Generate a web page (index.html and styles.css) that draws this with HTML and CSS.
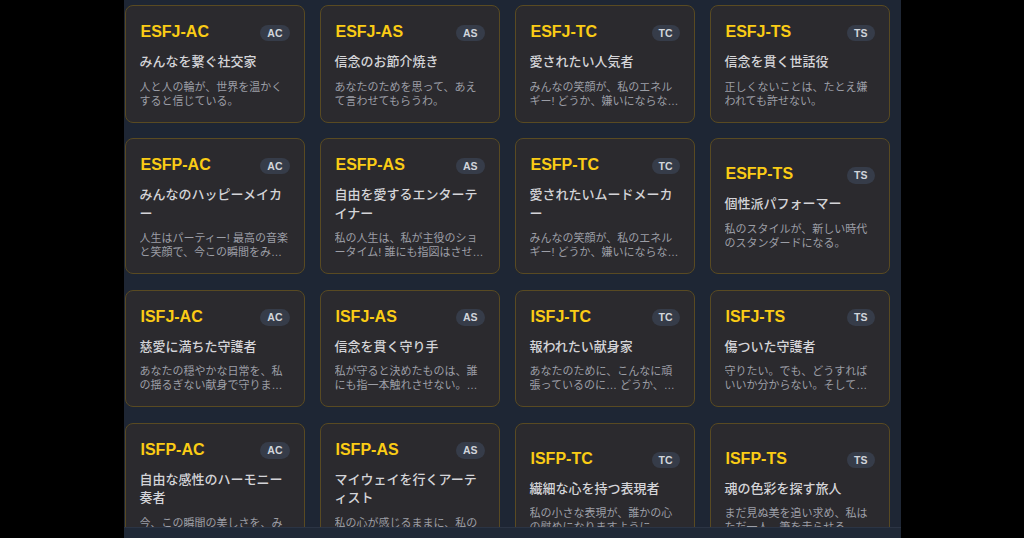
FILE: index.html
```html
<!DOCTYPE html>
<html lang="ja">
<head>
<meta charset="utf-8">
<title>Types</title>
<link rel="stylesheet" href="styles.css">
</head>
<body>
<div class="panel">
  <main class="scroll">
    <div class="grid">
      <div class="card"><div class="head"><span class="title">ESFJ-AC</span><span class="badge">AC</span></div><p class="tag">みんなを繋ぐ社交家</p><p class="desc">人と人の輪が、世界を温かくすると信じている。</p></div>
      <div class="card"><div class="head"><span class="title">ESFJ-AS</span><span class="badge">AS</span></div><p class="tag">信念のお節介焼き</p><p class="desc">あなたのためを思って、あえて言わせてもらうわ。</p></div>
      <div class="card"><div class="head"><span class="title">ESFJ-TC</span><span class="badge">TC</span></div><p class="tag">愛されたい人気者</p><p class="desc">みんなの笑顔が、私のエネルギー! どうか、嫌いにならないで。</p></div>
      <div class="card"><div class="head"><span class="title">ESFJ-TS</span><span class="badge">TS</span></div><p class="tag">信念を貫く世話役</p><p class="desc">正しくないことは、たとえ嫌われても許せない。</p></div>

      <div class="card"><div class="head"><span class="title">ESFP-AC</span><span class="badge">AC</span></div><p class="tag">みんなのハッピーメイカー</p><p class="desc">人生はパーティー! 最高の音楽と笑顔で、今この瞬間をみんなで楽しもう!</p></div>
      <div class="card"><div class="head"><span class="title">ESFP-AS</span><span class="badge">AS</span></div><p class="tag">自由を愛するエンターテイナー</p><p class="desc">私の人生は、私が主役のショータイム! 誰にも指図はさせない。</p></div>
      <div class="card"><div class="head"><span class="title">ESFP-TC</span><span class="badge">TC</span></div><p class="tag">愛されたいムードメーカー</p><p class="desc">みんなの笑顔が、私のエネルギー! どうか、嫌いにならないで。</p></div>
      <div class="card"><div class="head"><span class="title">ESFP-TS</span><span class="badge">TS</span></div><p class="tag">個性派パフォーマー</p><p class="desc">私のスタイルが、新しい時代のスタンダードになる。</p></div>

      <div class="card"><div class="head"><span class="title">ISFJ-AC</span><span class="badge">AC</span></div><p class="tag">慈愛に満ちた守護者</p><p class="desc">あなたの穏やかな日常を、私の揺るぎない献身で守ります。</p></div>
      <div class="card"><div class="head"><span class="title">ISFJ-AS</span><span class="badge">AS</span></div><p class="tag">信念を貫く守り手</p><p class="desc">私が守ると決めたものは、誰にも指一本触れさせない。それが私の誓い。</p></div>
      <div class="card"><div class="head"><span class="title">ISFJ-TC</span><span class="badge">TC</span></div><p class="tag">報われたい献身家</p><p class="desc">あなたのために、こんなに頑張っているのに… どうか、気づいてほしい。</p></div>
      <div class="card"><div class="head"><span class="title">ISFJ-TS</span><span class="badge">TS</span></div><p class="tag">傷ついた守護者</p><p class="desc">守りたい。でも、どうすればいいか分からない。そして今日も迷う。</p></div>

      <div class="card"><div class="head"><span class="title">ISFP-AC</span><span class="badge">AC</span></div><p class="tag">自由な感性のハーモニー奏者</p><p class="desc">今、この瞬間の美しさを、みんなと分かち合いたい。</p></div>
      <div class="card"><div class="head"><span class="title">ISFP-AS</span><span class="badge">AS</span></div><p class="tag">マイウェイを行くアーティスト</p><p class="desc">私の心が感じるままに、私の色で世界を描く。</p></div>
      <div class="card"><div class="head"><span class="title">ISFP-TC</span><span class="badge">TC</span></div><p class="tag">繊細な心を持つ表現者</p><p class="desc">私の小さな表現が、誰かの心の慰めになりますように。</p></div>
      <div class="card"><div class="head"><span class="title">ISFP-TS</span><span class="badge">TS</span></div><p class="tag">魂の色彩を探す旅人</p><p class="desc">まだ見ぬ美を追い求め、私はただ一人、筆を走らせる。</p></div>
    </div>
  </main>
  <footer class="bottom"></footer>
</div>
</body>
</html>
```

FILE: styles.css
```css
* { box-sizing: border-box; }
html, body { margin: 0; padding: 0; height: 100%; }
body {
  background: #000;
  font-family: "Liberation Sans", "Noto Sans CJK JP", sans-serif;
  overflow: hidden;
}
.panel {
  width: 777px;
  height: 538px;
  margin: 0 auto;
  background: #1e2634;
  display: flex;
  flex-direction: column;
}
.scroll {
  flex: 1;
  overflow: hidden;
  padding: 5px 11px 0 1px;
}
.grid {
  display: grid;
  grid-template-columns: repeat(4, 180px);
  column-gap: 15px;
  row-gap: 15.5px;
}
.card {
  background: #2b2a2e;
  border: 1px solid #594a22;
  border-radius: 8px;
  padding: 14px 14px 14px;
  display: flex;
  flex-direction: column;
  justify-content: center;
}
.head {
  display: flex;
  justify-content: space-between;
  align-items: center;
  height: 24px;
  padding-left: 1px;
}
.title {
  font-size: 16px;
  font-weight: 700;
  line-height: 24px;
  color: #facc15;
}
.badge {
  font-size: 10.5px;
  font-weight: 600;
  line-height: 12.5px;
  padding: 2px 7px;
  border-radius: 999px;
  background: #363c49;
  color: #d1d5db;
  margin-top: 2px;
}
.tag {
  margin: 9px 0 0;
  font-size: 13px;
  line-height: 18.5px;
  font-weight: 500;
  color: #d4d4d8;
}
.desc {
  margin: 8px 0 0;
  font-size: 11px;
  line-height: 14px;
  color: #9c9ea6;
  display: -webkit-box;
  -webkit-line-clamp: 2;
  -webkit-box-orient: vertical;
  overflow: hidden;
}
.bottom {
  height: 11px;
  flex-shrink: 0;
  background: #202937;
  border-top: 1px solid #2b3444;
}
```
